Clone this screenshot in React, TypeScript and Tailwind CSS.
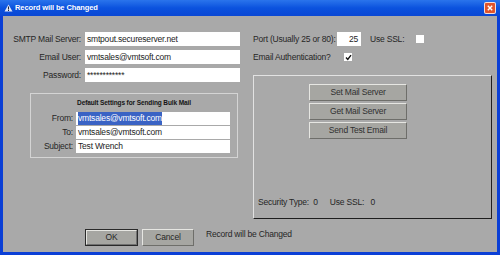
import React from 'react'

const font = { fontFamily: '"Liberation Sans", Arial, sans-serif' }

function Field({ value, width, selected }: { value: string; width: string; selected?: boolean }) {
  return (
    <div className={`${width} h-full bg-white flex items-center px-[2px] text-[#1c1c1c] overflow-hidden whitespace-nowrap`}>
      {selected ? <span className="bg-[#3a63c4] text-white">{value}</span> : value}
    </div>
  )
}

function RaisedButton({ label }: { label: string }) {
  return (
    <div className="w-[98px] h-[17px] flex items-center justify-center bg-[#a6a6a2] border border-t-[#e6e6e2] border-l-[#e6e6e2] border-b-[#6e6e6a] border-r-[#6e6e6a] text-[#303030]">
      {label}
    </div>
  )
}

function Check({ checked }: { checked?: boolean }) {
  return (
    <div className="w-[8px] h-[8px] bg-white flex items-center justify-center">
      {checked && (
        <svg width="7" height="7" viewBox="0 0 7 7">
          <path d="M1 3.5 L2.8 5.5 L6 1.2" stroke="#111" strokeWidth="1.4" fill="none" />
        </svg>
      )}
    </div>
  )
}

export default function App() {
  return (
    <div className="w-[500px] h-[255px] bg-[#0a3fd6] flex flex-col text-[8.5px] tracking-[-0.2px]" style={font}>
      {/* title bar */}
      <div className="h-[16px] flex items-center bg-gradient-to-b from-[#2a74ec] via-[#0b52de] to-[#0a47d4] px-[4px]">
        <svg width="9" height="8" viewBox="0 0 9 8" className="mr-[2px]">
          <path d="M4.5 0.5 L8.5 7.5 L0.5 7.5 Z" fill="#dfe6f5" />
          <rect x="4" y="2.5" width="1" height="3" fill="#223" />
          <rect x="4" y="6" width="1" height="1" fill="#223" />
        </svg>
        <span className="text-white font-bold text-[7.5px] tracking-[-0.1px]">Record will be Changed</span>
        <div className="ml-auto w-[12px] h-[12px] rounded-[2px] bg-[#e0542a] border border-white/80 flex items-center justify-center">
          <svg width="6" height="6" viewBox="0 0 6 6">
            <path d="M0.8 0.8 L5.2 5.2 M5.2 0.8 L0.8 5.2" stroke="#fff" strokeWidth="1.4" />
          </svg>
        </div>
      </div>

      {/* client area */}
      <div className="flex-1 ml-[3px] mr-[3px] mb-[3px] bg-[#a9a9a9] flex flex-col pt-[16px] pl-[5px] text-[#262626]">
        <div className="flex">
          {/* left column */}
          <div className="w-[245px] flex flex-col">
            <div className="flex flex-col gap-[4px]">
              <div className="h-[14px] flex items-center">
                <div className="w-[73px] text-right">SMTP Mail Server:</div>
                <div className="ml-[4px] h-full"><Field value="smtpout.secureserver.net" width="w-[155px]" /></div>
              </div>
              <div className="h-[14px] flex items-center">
                <div className="w-[73px] text-right">Email User:</div>
                <div className="ml-[4px] h-full"><Field value="vmtsales@vmtsoft.com" width="w-[155px]" /></div>
              </div>
              <div className="h-[14px] flex items-center">
                <div className="w-[73px] text-right">Password:</div>
                <div className="ml-[4px] h-full"><Field value="************" width="w-[155px]" /></div>
              </div>
            </div>

            <div className="mt-[11px] ml-[22px] w-[208px] h-[65px] border border-[#d4d4d4] flex flex-col pt-[4px]">
              <div className="h-[10px] flex items-center justify-center font-bold text-[6.5px] tracking-[-0.1px] text-[#151515]">
                Default Settings for Sending Bulk Mail
              </div>
              <div className="mt-[4px] flex flex-col gap-[1px]">
                <div className="h-[13px] flex items-center">
                  <div className="w-[42px] text-right">From:</div>
                  <div className="ml-[3px] h-full"><Field value="vmtsales@vmtsoft.com" width="w-[154px]" selected /></div>
                </div>
                <div className="h-[13px] flex items-center">
                  <div className="w-[42px] text-right">To:</div>
                  <div className="ml-[3px] h-full"><Field value="vmtsales@vmtsoft.com" width="w-[154px]" /></div>
                </div>
                <div className="h-[13px] flex items-center">
                  <div className="w-[42px] text-right">Subject:</div>
                  <div className="ml-[3px] h-full"><Field value="Test Wrench" width="w-[154px]" /></div>
                </div>
              </div>
            </div>
          </div>

          {/* right column */}
          <div className="flex flex-col">
            <div className="flex flex-col gap-[4px]">
              <div className="h-[14px] flex items-center">
                <div className="w-[84px]">Port (Usually 25 or 80):</div>
                <div className="w-[24px] h-full bg-white flex items-center justify-end pr-[3px]">25</div>
                <div className="ml-[9px] w-[46px]">Use SSL:</div>
                <Check />
              </div>
              <div className="h-[14px] flex items-center">
                <div className="w-[91px]">Email Authentication?</div>
                <Check checked />
              </div>
            </div>

            <div className="mt-[11px] w-[239px] h-[144px] border border-t-[#e2e2e2] border-l-[#e2e2e2] border-b-[#1e1e1e] border-r-[#1e1e1e] flex flex-col pt-[8px] pb-[9px]">
              <div className="ml-[55px] flex flex-col gap-[2px]">
                <RaisedButton label="Set Mail Server" />
                <RaisedButton label="Get Mail Server" />
                <RaisedButton label="Send Test Email" />
              </div>
              <div className="mt-auto ml-[4px] flex">
                <span>Security Type:&nbsp;&nbsp;0</span>
                <span className="ml-[12px]">Use SSL:&nbsp;&nbsp;&nbsp;0</span>
              </div>
            </div>
          </div>
        </div>

        {/* bottom buttons */}
        <div className="mt-[10px] ml-[77px] flex items-center">
          <div className="w-[53px] h-[17px] border border-[#2a2a2a] flex items-center justify-center bg-[#a6a6a2]">
            <div className="w-full h-full border border-t-[#e6e6e2] border-l-[#e6e6e2] border-b-[#707070] border-r-[#707070] flex items-center justify-center">OK</div>
          </div>
          <div className="ml-[4px] w-[52px] h-[17px] bg-[#a6a6a2] border border-t-[#e6e6e2] border-l-[#e6e6e2] border-b-[#6e6e6a] border-r-[#6e6e6a] flex items-center justify-center">
            Cancel
          </div>
          <div className="ml-[12px] -mt-[7px]">Record will be Changed</div>
        </div>
      </div>
    </div>
  )
}
